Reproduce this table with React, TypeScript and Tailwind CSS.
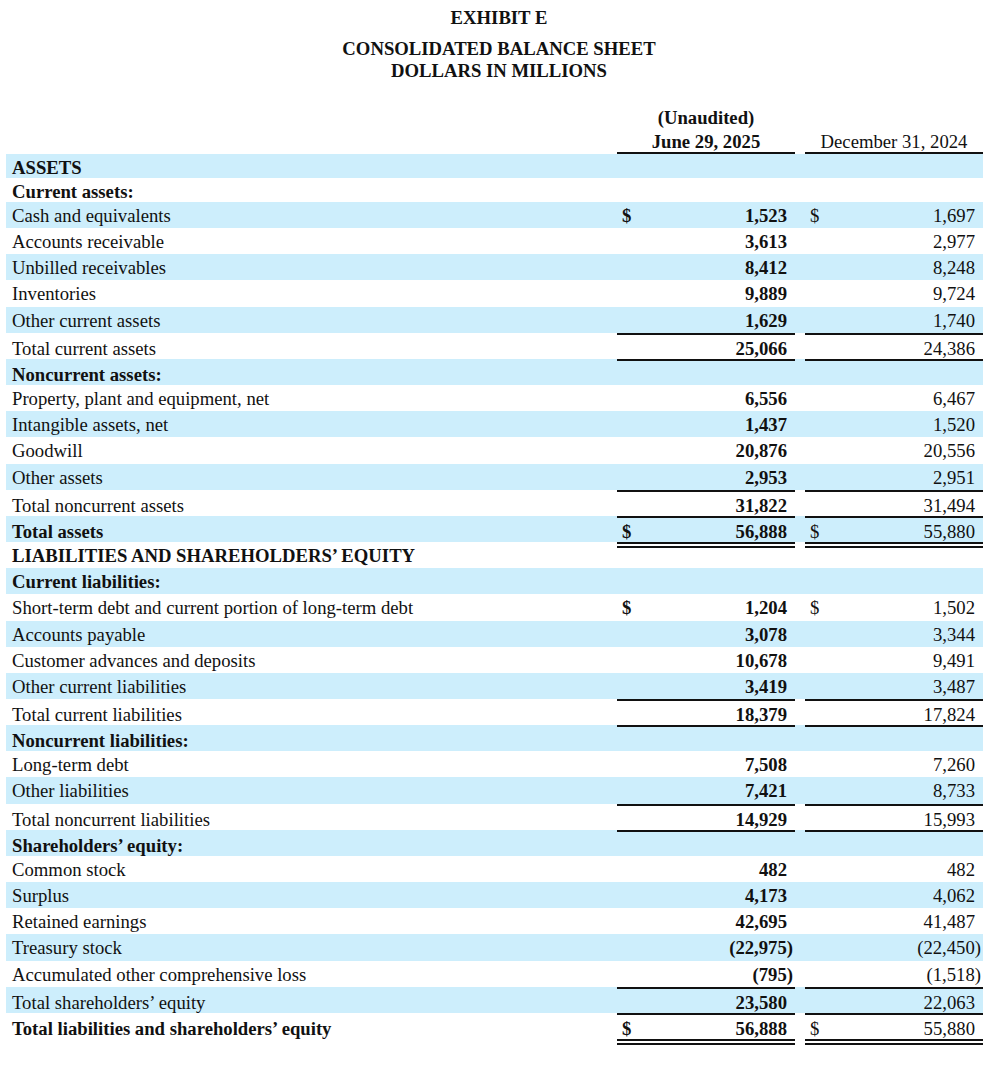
import React from 'react';

type Line = 'single' | 'double' | undefined;

type Row = {
  label: string;
  bold?: boolean;
  short?: boolean;
  a?: string;
  b?: string;
  dollar?: boolean;
  top?: Line;
};

const rows: Row[] = [
  { label: 'ASSETS', bold: true, short: true },
  { label: 'Current assets:', bold: true, short: true },
  { label: 'Cash and equivalents', a: '1,523', b: '1,697', dollar: true },
  { label: 'Accounts receivable', a: '3,613', b: '2,977' },
  { label: 'Unbilled receivables', a: '8,412', b: '8,248' },
  { label: 'Inventories', a: '9,889', b: '9,724' },
  { label: 'Other current assets', a: '1,629', b: '1,740' },
  { label: 'Total current assets', a: '25,066', b: '24,386', top: 'single' },
  { label: 'Noncurrent assets:', bold: true, top: 'single' },
  { label: 'Property, plant and equipment, net', a: '6,556', b: '6,467' },
  { label: 'Intangible assets, net', a: '1,437', b: '1,520' },
  { label: 'Goodwill', a: '20,876', b: '20,556' },
  { label: 'Other assets', a: '2,953', b: '2,951' },
  { label: 'Total noncurrent assets', a: '31,822', b: '31,494', top: 'single' },
  { label: 'Total assets', bold: true, a: '56,888', b: '55,880', dollar: true, top: 'single' },
  { label: 'LIABILITIES AND SHAREHOLDERS’ EQUITY', bold: true, top: 'double' },
  { label: 'Current liabilities:', bold: true },
  { label: 'Short-term debt and current portion of long-term debt', a: '1,204', b: '1,502', dollar: true },
  { label: 'Accounts payable', a: '3,078', b: '3,344' },
  { label: 'Customer advances and deposits', a: '10,678', b: '9,491' },
  { label: 'Other current liabilities', a: '3,419', b: '3,487' },
  { label: 'Total current liabilities', a: '18,379', b: '17,824', top: 'single' },
  { label: 'Noncurrent liabilities:', bold: true, top: 'single' },
  { label: 'Long-term debt', a: '7,508', b: '7,260' },
  { label: 'Other liabilities', a: '7,421', b: '8,733' },
  { label: 'Total noncurrent liabilities', a: '14,929', b: '15,993', top: 'single' },
  { label: 'Shareholders’ equity:', bold: true, top: 'single' },
  { label: 'Common stock', a: '482', b: '482' },
  { label: 'Surplus', a: '4,173', b: '4,062' },
  { label: 'Retained earnings', a: '42,695', b: '41,487' },
  { label: 'Treasury stock', a: '(22,975)', b: '(22,450)' },
  { label: 'Accumulated other comprehensive loss', a: '(795)', b: '(1,518)' },
  { label: 'Total shareholders’ equity', a: '23,580', b: '22,063', top: 'single' },
  { label: 'Total liabilities and shareholders’ equity', bold: true, a: '56,888', b: '55,880', dollar: true, top: 'single' },
];

function Cell({ value, dollar, bold, top }: { value?: string; dollar?: boolean; bold?: boolean; top?: Line }) {
  const negative = value?.startsWith('(');
  return (
    <div
      className={`w-[178px] flex justify-between pl-[5px] leading-[28px] border-[#111] ${
        negative ? 'pr-[2px]' : 'pr-[8px]'
      } ${top === 'single' ? 'border-t-2' : ''} ${top === 'double' ? 'border-t-[6px] border-double' : ''} ${
        bold ? 'font-bold' : ''
      }`}
    >
      <span>{dollar ? '$' : ''}</span>
      <span>{value}</span>
    </div>
  );
}

export default function App() {
  return (
    <div className="min-h-screen bg-white text-[#111] text-[18.7px] font-['Liberation_Serif',serif]">
      <div className="w-[998px] pt-[6px] text-center font-bold">
        <div className="leading-[24px]">EXHIBIT E</div>
        <div className="mt-[8px] leading-[22px]">
          <div>CONSOLIDATED BALANCE SHEET</div>
          <div>DOLLARS IN MILLIONS</div>
        </div>
      </div>

      <div className="ml-[6px] w-[977px]">
        <div className="mt-[24px] flex items-end">
          <div className="flex-1" />
          <div className="w-[178px] text-center font-bold border-b-2 border-[#111]">
            <div className="leading-[24px] mb-[2px]">(Unaudited)</div>
            <div className="leading-[20px]">June 29, 2025</div>
          </div>
          <div className="w-[10px]" />
          <div className="w-[178px] text-center leading-[20px] border-b-2 border-[#111]">December 31, 2024</div>
        </div>

        {rows.map((r, i) => (
          <div
            key={r.label}
            className={`flex ${r.short ? 'h-[24px]' : 'h-[26.17px]'} ${i % 2 === 0 ? 'bg-[#cdeefc]' : ''}`}
          >
            <div
              className={`flex-1 pl-[6px] leading-[28px] whitespace-nowrap ${r.bold ? 'font-bold' : ''} ${
                r.top === 'single' ? 'pt-[2px]' : ''
              }`}
            >
              {r.label}
            </div>
            <Cell value={r.a} dollar={r.dollar} bold top={r.top} />
            <div className="w-[10px]" />
            <Cell value={r.b} dollar={r.dollar} top={r.top} />
          </div>
        ))}

        <div className="flex h-[10px]">
          <div className="flex-1" />
          <Cell top="double" />
          <div className="w-[10px]" />
          <Cell top="double" />
        </div>
      </div>
    </div>
  );
}
